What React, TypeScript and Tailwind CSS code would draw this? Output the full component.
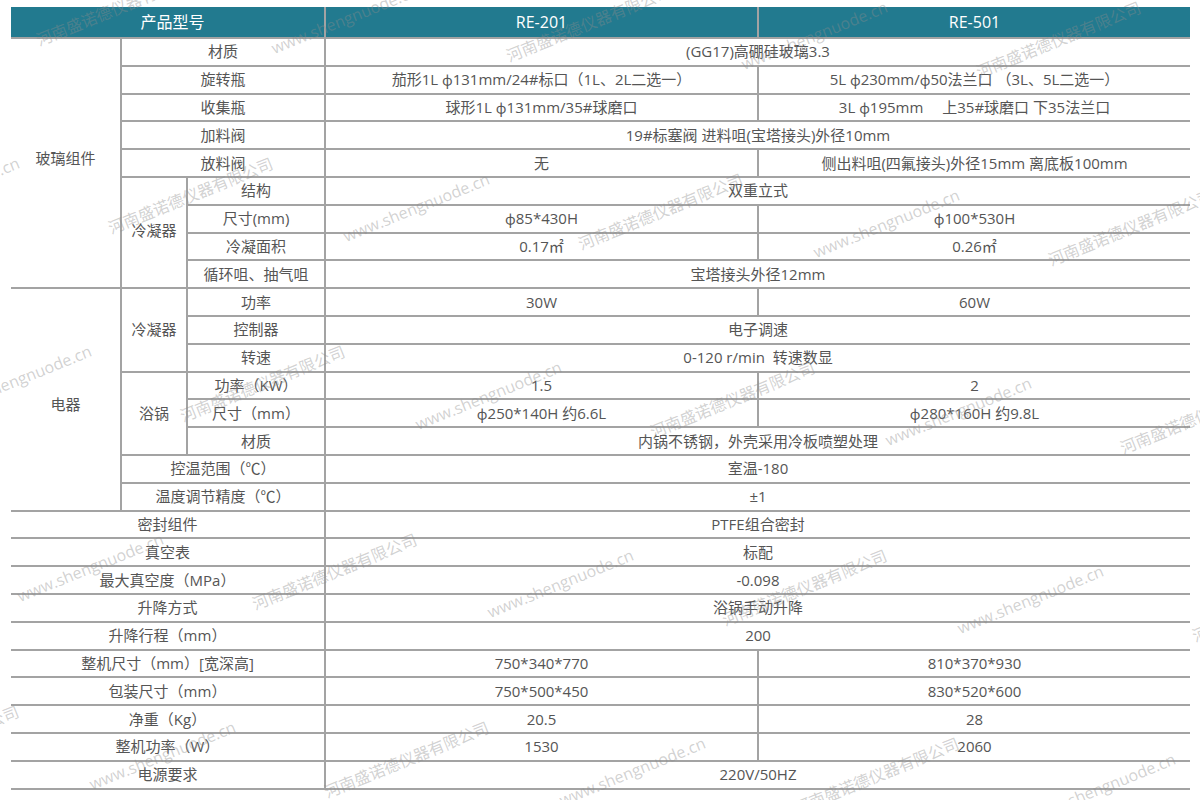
import React from "react";

type Cell = { text: string; col: string; row: string; cls?: string };

const R = (start: number, span = 1) => `${start + 1}/${start + 1 + span}`;

const cells: Cell[] = [
  { text: "玻璃组件", col: "1/2", row: R(1, 9), cls: "pb-[10px]" },
  { text: "材质", col: "2/4", row: R(1) },
  { text: "(GG17)高硼硅玻璃3.3", col: "4/6", row: R(1) },
  { text: "旋转瓶", col: "2/4", row: R(2) },
  { text: "茄形1L ф131mm/24#标口（1L、2L二选一）", col: "4/5", row: R(2) },
  { text: "5L ф230mm/ф50法兰口 （3L、5L二选一）", col: "5/6", row: R(2) },
  { text: "收集瓶", col: "2/4", row: R(3) },
  { text: "球形1L ф131mm/35#球磨口", col: "4/5", row: R(3) },
  { text: "3L ф195mm　 上35#球磨口 下35法兰口", col: "5/6", row: R(3) },
  { text: "加料阀", col: "2/4", row: R(4) },
  { text: "19#标塞阀 进料咀(宝塔接头)外径10mm", col: "4/6", row: R(4) },
  { text: "放料阀", col: "2/4", row: R(5) },
  { text: "无", col: "4/5", row: R(5) },
  { text: "侧出料咀(四氟接头)外径15mm 离底板100mm", col: "5/6", row: R(5) },
  { text: "冷凝器", col: "2/3", row: R(6, 4), cls: "pb-[4px]" },
  { text: "结构", col: "3/4", row: R(6) },
  { text: "双重立式", col: "4/6", row: R(6) },
  { text: "尺寸(mm)", col: "3/4", row: R(7) },
  { text: "ф85*430H", col: "4/5", row: R(7) },
  { text: "ф100*530H", col: "5/6", row: R(7) },
  { text: "冷凝面积", col: "3/4", row: R(8) },
  { text: "0.17㎡", col: "4/5", row: R(8) },
  { text: "0.26㎡", col: "5/6", row: R(8) },
  { text: "循环咀、抽气咀", col: "3/4", row: R(9) },
  { text: "宝塔接头外径12mm", col: "4/6", row: R(9) },
  { text: "电器", col: "1/2", row: R(10, 8), cls: "pt-[10px]" },
  { text: "冷凝器", col: "2/3", row: R(10, 3) },
  { text: "功率", col: "3/4", row: R(10) },
  { text: "30W", col: "4/5", row: R(10) },
  { text: "60W", col: "5/6", row: R(10) },
  { text: "控制器", col: "3/4", row: R(11) },
  { text: "电子调速", col: "4/6", row: R(11) },
  { text: "转速", col: "3/4", row: R(12) },
  { text: "0-120 r/min  转速数显", col: "4/6", row: R(12) },
  { text: "浴锅", col: "2/3", row: R(13, 3) },
  { text: "功率（KW）", col: "3/4", row: R(13) },
  { text: "1.5", col: "4/5", row: R(13) },
  { text: "2", col: "5/6", row: R(13) },
  { text: "尺寸（mm）", col: "3/4", row: R(14) },
  { text: "ф250*140H 约6.6L", col: "4/5", row: R(14) },
  { text: "ф280*160H 约9.8L", col: "5/6", row: R(14) },
  { text: "材质", col: "3/4", row: R(15) },
  { text: "内锅不锈钢，外壳采用冷板喷塑处理", col: "4/6", row: R(15) },
  { text: "控温范围（℃）", col: "2/4", row: R(16) },
  { text: "室温-180", col: "4/6", row: R(16) },
  { text: "温度调节精度（℃）", col: "2/4", row: R(17) },
  { text: "±1", col: "4/6", row: R(17) },
  { text: "密封组件", col: "1/4", row: R(18) },
  { text: "PTFE组合密封", col: "4/6", row: R(18) },
  { text: "真空表", col: "1/4", row: R(19) },
  { text: "标配", col: "4/6", row: R(19) },
  { text: "最大真空度（MPa）", col: "1/4", row: R(20) },
  { text: "-0.098", col: "4/6", row: R(20) },
  { text: "升降方式", col: "1/4", row: R(21) },
  { text: "浴锅手动升降", col: "4/6", row: R(21) },
  { text: "升降行程（mm）", col: "1/4", row: R(22) },
  { text: "200", col: "4/6", row: R(22) },
  { text: "整机尺寸（mm）[宽深高]", col: "1/4", row: R(23) },
  { text: "750*340*770", col: "4/5", row: R(23) },
  { text: "810*370*930", col: "5/6", row: R(23) },
  { text: "包装尺寸（mm）", col: "1/4", row: R(24) },
  { text: "750*500*450", col: "4/5", row: R(24) },
  { text: "830*520*600", col: "5/6", row: R(24) },
  { text: "净重（Kg）", col: "1/4", row: R(25) },
  { text: "20.5", col: "4/5", row: R(25) },
  { text: "28", col: "5/6", row: R(25) },
  { text: "整机功率（W）", col: "1/4", row: R(26) },
  { text: "1530", col: "4/5", row: R(26) },
  { text: "2060", col: "5/6", row: R(26) },
  { text: "电源要求", col: "1/4", row: R(27) },
  { text: "220V/50HZ", col: "4/6", row: R(27) },
];

const marks: { x: number; y: number; t: string }[] = [];
for (let r = -2; r < 7; r++) {
  for (let c = -2; c < 8; c++) {
    const x = 40 + c * 235 + r * 72 - Math.floor((r * 72) / 470) * 470;
    const y = 48 + r * 188 + c * 8;
    marks.push({ x, y, t: c % 2 === 0 ? "河南盛诺德仪器有限公司" : "www.shengnuode.cn" });
  }
}

export default function App() {
  return (
    <div
      className="relative w-[1200px] h-[800px] bg-white overflow-hidden"
      style={{ fontFamily: '"Open Sans", "Noto Sans CJK SC", sans-serif' }}
    >
      <div className="absolute left-[11px] top-[7px]">
        <div className="grid grid-cols-[109px_64px_136px_431px_431px] grid-rows-[30px_repeat(27,25.8px)] gap-[2px] bg-[#a3a3a3] pb-[2px] text-[15px] text-[#555555] leading-none">
          <div className="col-[1/4] row-[1/2] bg-[#227a8f] text-white text-[16px] flex items-center justify-center pl-[10px]">产品型号</div>
          <div className="col-[4/5] row-[1/2] bg-[#227a8f] text-white text-[16px] flex items-center justify-center">RE-201</div>
          <div className="col-[5/6] row-[1/2] bg-[#227a8f] text-white text-[16px] flex items-center justify-center">RE-501</div>
          {cells.map((c, i) => (
            <div
              key={i}
              className={`bg-white flex items-center justify-center whitespace-pre ${c.cls ?? ""}`}
              style={{ gridColumn: c.col, gridRow: c.row }}
            >
              {c.text}
            </div>
          ))}
        </div>
      </div>
      <div className="absolute inset-0 pointer-events-none" aria-hidden="true">
        {marks.map((m, i) => (
          <span
            key={i}
            className="absolute whitespace-nowrap text-[16px] leading-none text-[#8c8c8c]/40 origin-bottom-left -rotate-[22deg]"
            style={{ left: m.x, top: m.y - 16 }}
          >
            {m.t}
          </span>
        ))}
      </div>
    </div>
  );
}
